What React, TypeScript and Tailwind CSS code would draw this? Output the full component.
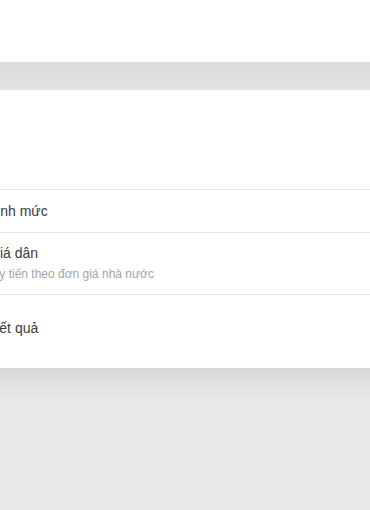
const font = { fontFamily: '"Liberation Sans", Arial, sans-serif' };

function Row({
  title,
  shift,
  className,
  children,
}: {
  title: string;
  shift: string;
  className: string;
  children?: React.ReactNode;
}) {
  return (
    <div className={`border-t border-[#e5e5ea] overflow-hidden ${className}`}>
      <div className={`whitespace-nowrap text-[14px] leading-[20px] text-[#3b3b41] ${shift}`}>
        {title}
      </div>
      {children}
    </div>
  );
}

export default function App() {
  return (
    <div className="w-[370px] h-[510px] flex flex-col bg-[#e9e9e9] overflow-hidden" style={font}>
      <div className="h-[62px] bg-white" />
      <div className="h-[28px] bg-gradient-to-b from-[#dbdbdb] to-[#e4e4e4]" />

      <div className="bg-white">
        <div className="h-[99px]" />
        <Row title="Định mức" shift="-ml-[13px]" className="h-[43px] flex items-center" />
        <Row title="Giá dân" shift="-ml-[11px]" className="h-[62px] pt-[10px]">
          <div className="mt-[3px] whitespace-nowrap text-[12px] leading-[16px] text-[#a3a3aa] -ml-[14px]">
            Lũy tiến theo đơn giá nhà nước
          </div>
        </Row>
        <Row title="Kết quả" shift="-ml-[10px]" className="h-[74px] pt-[23px]" />
      </div>

      <div className="flex-1 flex flex-col">
        <div className="h-[32px] bg-gradient-to-b from-[#d8d8d8] to-[#e9e9e9]" />
      </div>
    </div>
  );
}
